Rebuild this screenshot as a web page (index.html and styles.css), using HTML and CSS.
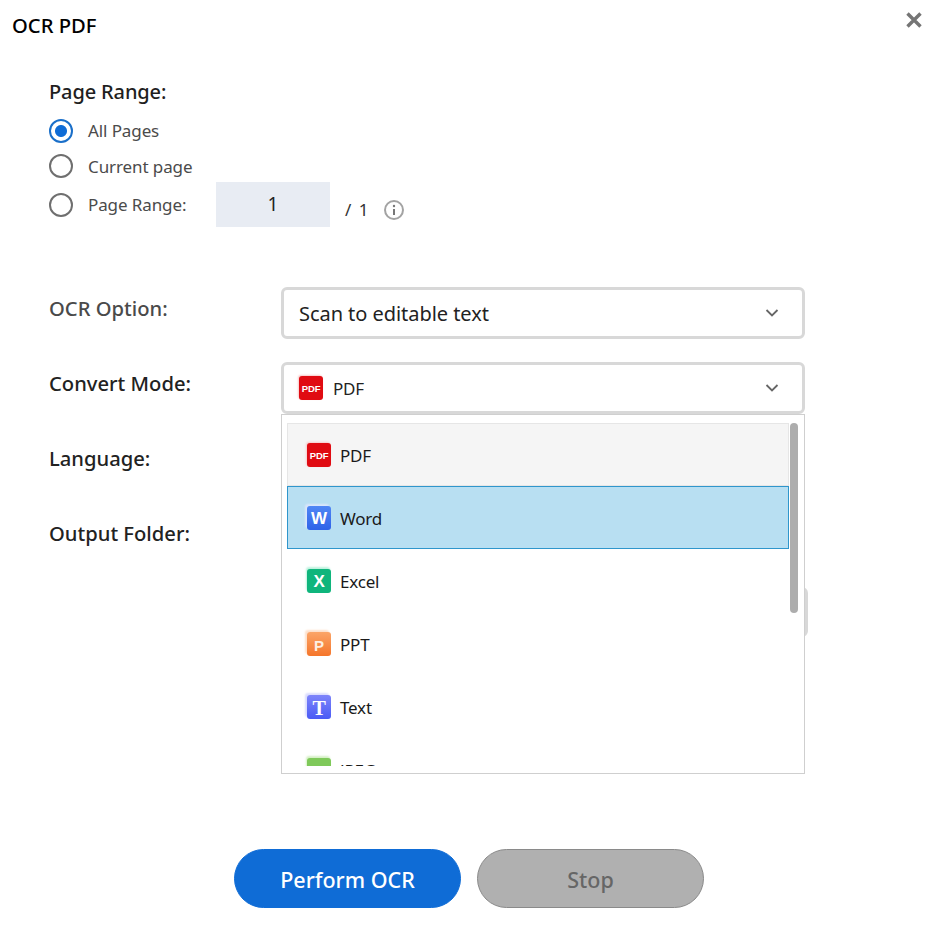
FILE: index.html
```html
<!DOCTYPE html>
<html lang="en">
<head>
<meta charset="utf-8">
<title>OCR PDF</title>
<link rel="stylesheet" href="styles.css">
</head>
<body>
<div class="dialog">
  <header class="titlebar">
    <h1 class="title">OCR PDF</h1>
    <svg class="close" viewBox="0 0 18 18" aria-label="Close"><path d="M2.5 2.5 15.5 15.5M15.5 2.5 2.5 15.5"/></svg>
  </header>

  <section class="range">
    <h2 class="range-title">Page Range:</h2>
    <div class="radio-row first"><span class="radio on"></span><span class="radio-label">All Pages</span></div>
    <div class="radio-row second"><span class="radio"></span><span class="radio-label low">Current page</span></div>
    <div class="radio-row third">
      <span class="radio"></span><span class="radio-label fixed">Page Range:</span>
      <span class="page-input">1</span>
      <span class="page-total">/ 1</span>
      <svg class="info" viewBox="0 0 22 22"><circle cx="11" cy="11" r="9"/><path d="M11 10v6"/><circle class="dot" cx="11" cy="7" r="1.2"/></svg>
    </div>
  </section>

  <section class="form">
    <div class="form-row">
      <label class="form-label muted">OCR Option:</label>
      <div class="select"><span class="select-text">Scan to editable text</span>
        <svg class="chev" viewBox="0 0 14 8"><path d="M1.5 1 7 6.5 12.5 1"/></svg></div>
    </div>
    <div class="form-row mode-row">
      <label class="form-label">Convert Mode:</label>
      <div class="select"><span class="ficon pdf small-gap">PDF</span><span class="select-small">PDF</span>
        <svg class="chev" viewBox="0 0 14 8"><path d="M1.5 1 7 6.5 12.5 1"/></svg></div>
      <div class="menu">
        <div class="menu-clip">
          <div class="item hover"><span class="ficon pdf">PDF</span>PDF</div>
          <div class="item selected"><span class="ficon word">W</span>Word</div>
          <div class="item"><span class="ficon excel">X</span>Excel</div>
          <div class="item"><span class="ficon ppt">P</span>PPT</div>
          <div class="item"><span class="ficon txt">T</span>Text</div>
          <div class="item"><span class="ficon jpeg"></span>JPEG</div>
        </div>
        <div class="scrollbar"></div>
      </div>
    </div>
    <div class="form-row">
      <label class="form-label">Language:</label>
      <div class="select"></div>
    </div>
    <div class="form-row">
      <label class="form-label">Output Folder:</label>
      <div class="select"></div>
    </div>
    <div class="form-row extra-row">
      <span class="form-label"></span>
      <div class="select wide"></div>
    </div>
  </section>

  <footer class="actions">
    <button class="btn primary">Perform OCR</button>
    <button class="btn stop">Stop</button>
  </footer>
</div>
</body>
</html>
```

FILE: styles.css
```css
* { box-sizing: border-box; }
html, body { margin: 0; padding: 0; background: #fff; }
body { font-family: "Noto Sans", "Open Sans", sans-serif; color: #1a1a1a; }
.dialog { width: 938px; height: 929px; overflow: hidden; display: flex; flex-direction: column; }

.titlebar { display: flex; justify-content: space-between; height: 52px; padding: 11px 15px 0 12px; flex: none; }
.title { margin: 0; font-size: 20.2px; line-height: 28px; font-weight: 500; color: #000; }
.close { width: 18px; height: 18px; }
.close path { fill: none; stroke: #757575; stroke-width: 3.4; }

.range { padding: 0 0 0 49px; height: 235px; flex: none; }
.range-title { margin: 26px 0 0; font-size: 20px; line-height: 28px; font-weight: 500; color: #1f1f1f; letter-spacing: -0.13px; }
.radio-row { display: flex; align-items: center; height: 24px; }
.radio-row.first { margin-top: 13px; }
.radio-row.second { margin-top: 11px; }
.radio-row.third { margin-top: 15px; }
.radio { width: 24px; height: 24px; border: 2px solid #6f6f6f; border-radius: 50%; background: #fff; flex: none; }
.radio.on { border-color: #1a6fc9; background: radial-gradient(circle, #0f6cd6 0 5.5px, #fff 6.5px); }
.radio-label { margin-left: 15px; font-size: 17px; line-height: 24px; color: #4b4b4b; letter-spacing: -0.1px; }
.radio-label.low { padding-top: 2px; }
.radio-label.fixed { width: 128px; flex: none; }
.page-input { width: 114px; height: 45px; flex: none; margin-bottom: 2px; background: #e8ecf3; display: flex; align-items: center; justify-content: center; font-size: 19px; color: #222; }
.page-total { margin: 9px 0 0 15px; font-size: 17px; word-spacing: 3px; color: #333; }
.info { width: 22px; height: 22px; margin: 9px 0 0 15px; }
.info circle { fill: none; stroke: #a3a3a3; stroke-width: 2; }
.info path { stroke: #777; stroke-width: 2; }
.info .dot { fill: #777; stroke: none; }

.form { height: 557px; flex: none; display: flex; flex-direction: column; }
.form-row { display: flex; height: 52px; margin-bottom: 23px; padding-left: 49px; position: relative; flex: none; }
.form-label { width: 232px; flex: none; font-size: 20.2px; line-height: 42px; font-weight: 500; color: #222; }
.form-label.muted { color: #4a4a4a; }
.select { width: 524px; height: 52px; border: 3px solid #d8d8d8; border-radius: 6px; background: #fff; display: flex; align-items: center; padding: 0 0 0 15px; }
.select.wide { width: 527px; height: 50px; }
.select-text { font-size: 20px; color: #222; letter-spacing: -0.05px; }
.select-small { font-size: 17px; color: #222; margin-left: 10px; letter-spacing: -0.2px; }
.chev { width: 14px; height: 8px; margin-left: auto; margin-right: 23px; flex: none; }
.chev path { fill: none; stroke: #666; stroke-width: 1.8; }

.menu { position: absolute; left: 281px; top: 52px; width: 524px; height: 360px; background: #fff; border: 1px solid #cfcfcf; z-index: 5; padding: 8px 0 0 5px; }
.menu-clip { width: 502px; height: 343px; overflow: hidden; }
.item { height: 63px; display: flex; align-items: center; padding: 1px 0 0 19px; font-size: 17px; color: #1a1a1a; letter-spacing: -0.2px; border: 1px solid transparent; }
.item.hover { background: #f5f5f5; border-color: #e6e6e6; }
.item.selected { background: #b8dff2; border-color: #2f96cc; }
.scrollbar { position: absolute; left: 508px; top: 8px; width: 8px; height: 190px; background: #adadad; border-radius: 4px; }

.ficon { width: 24px; height: 24px; flex: none; margin-right: 9px; padding-top: 2px; border-radius: 3px; display: flex; align-items: center; justify-content: center; color: #fff; font-family: "Liberation Sans", sans-serif; font-weight: 700; font-size: 17px; }
.ficon.small-gap { margin-right: 0; }
.ficon.pdf { background: #e00b12; font-size: 9.5px; letter-spacing: -0.1px; padding-top: 1px; box-shadow: -1px -1px 2px #f8c9c9; }
.ficon.word { background: linear-gradient(#4f86f5, #2f62e8); box-shadow: -2px -2px 2px #dbe6fb; }
.ficon.excel { background: #0fb57c; box-shadow: -1px -2px 2px #bdf2de; }
.ficon.ppt { background: linear-gradient(#fba568, #f5752a); box-shadow: -2px -2px 2px #fde0cb; font-size: 15px; color: #fdeee2; }
.ficon.txt { background: linear-gradient(#7d84fa, #4a5bf5); box-shadow: -2px -2px 2px #dadcfd; font-family: "Liberation Serif", serif; font-size: 20px; }
.ficon.jpeg { background: #7fc95a; box-shadow: -1px -2px 2px #d5f0c6; }

.actions { display: flex; justify-content: center; gap: 16px; margin-top: 5px; flex: none; }
.btn { width: 227px; height: 59px; border-radius: 30px; font-family: inherit; font-size: 21.5px; font-weight: 500; padding: 2px 0 0; }
.btn.primary { background: #0f6cd6; border: 1px solid #0f6cd6; color: #fff; }
.btn.stop { background: #b0b0b0; border: 1px solid #8a8a8a; color: #666; }
```
